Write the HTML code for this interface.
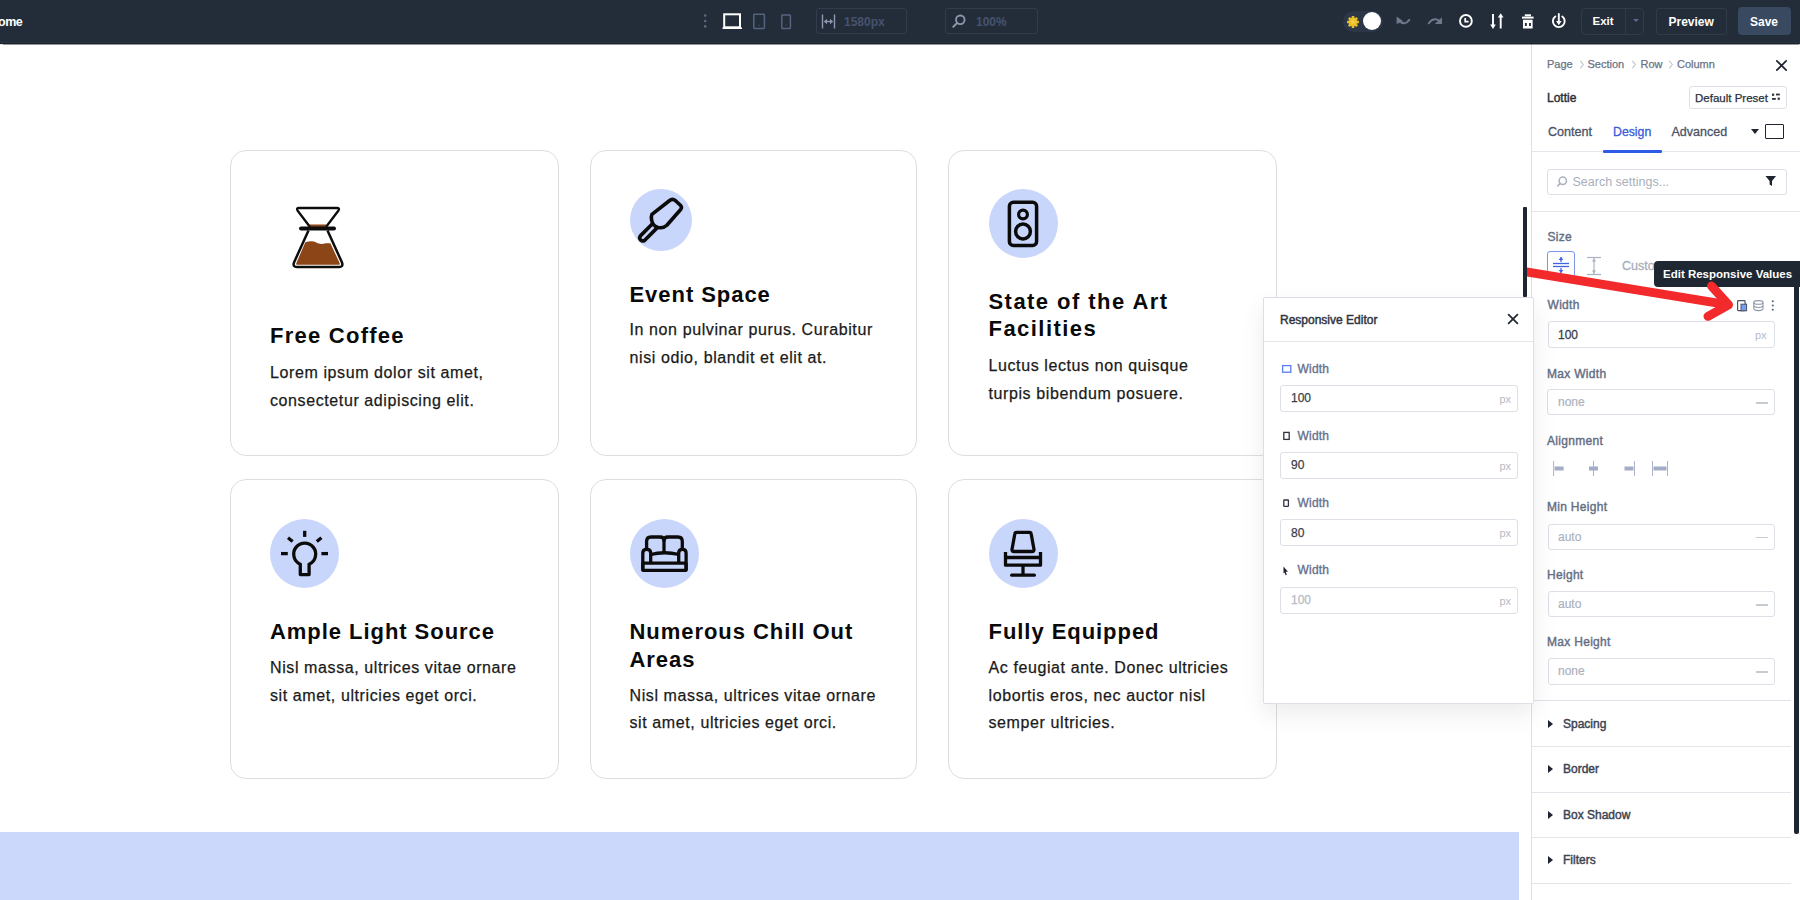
<!DOCTYPE html>
<html><head><meta charset="utf-8">
<style>
*{box-sizing:border-box;margin:0;padding:0}
html,body{width:1800px;height:900px;overflow:hidden;background:#fff;font-family:"Liberation Sans",sans-serif}
.abs{position:absolute}
#top{position:absolute;left:0;top:0;width:1800px;height:44px;background:#232d39;border-bottom:1.5px solid #19202a;box-shadow:inset 0 -1px 0 #2a3441,0 0.6px 0.8px rgba(20,26,34,0.45);z-index:5}
#canvas{position:absolute;left:0;top:44px;width:1531px;height:856px;background:#fff;overflow:hidden}
.card{position:absolute;border:1px solid #dedede;border-radius:16px;background:#fff}
.ttl{position:absolute;font-weight:700;font-size:22px;letter-spacing:0.95px;color:#0a0a0a;line-height:27.5px;white-space:nowrap}
.dsc{position:absolute;font-size:16px;letter-spacing:0.6px;color:#1a1a1a;-webkit-text-stroke:0.25px #1a1a1a;line-height:28px;white-space:nowrap}
.circ{position:absolute;border-radius:50%;background:#c9d6fb}
#panel{position:absolute;left:1531px;top:44px;width:269px;height:856px;background:#fff;border-left:1px solid #dde0e6}
.plabel{position:absolute;font-size:12px;letter-spacing:0.3px;color:#646e83;font-weight:400;-webkit-text-stroke:0.4px #646e83;white-space:nowrap}
.pin{position:absolute;border:1px solid #dcdfe5;border-radius:3px;background:#fff}
.ph{position:absolute;font-size:12px;color:#acb2bf;-webkit-text-stroke:0.2px #acb2bf;white-space:nowrap}
.dash{position:absolute;width:12px;height:1.5px;background:#c5cad3}
.hr{position:absolute;height:1px;background:#e3e5ea}
.sect{position:absolute;font-size:12px;font-weight:400;-webkit-text-stroke:0.45px #3d4452;color:#3d4452;white-space:nowrap}
.tri{position:absolute;width:0;height:0;border-top:4px solid transparent;border-bottom:4px solid transparent;border-left:5px solid #1e2430}
#popup{position:absolute;left:1263px;top:297px;width:271px;height:407px;border-radius:2px;background:#fff;border:1px solid #dcdfe5;box-shadow:0 10px 24px rgba(0,0,0,0.08)}
.rlabel{position:absolute;font-size:12px;letter-spacing:0.2px;color:#66718d;font-weight:400;-webkit-text-stroke:0.35px #66718d;white-space:nowrap}
.rin{position:absolute;left:16px;width:238px;height:27px;border:1px solid #dcdfe5;border-radius:3px;background:#fff}
.rval{position:absolute;left:10px;top:5.5px;font-size:12px;color:#3a3f4a;-webkit-text-stroke:0.25px currentColor}
.rpx{position:absolute;right:6px;top:7px;font-size:11px;color:#b5bac6}
</style></head>
<body>
<!-- TOP BAR -->
<div id="top">
  <div class="abs" style="left:-2px;top:14px;font-size:12.5px;letter-spacing:-0.5px;line-height:16px;font-weight:700;color:#fff">ome</div>
  <svg class="abs" style="left:695px;top:8px" width="110" height="28" viewBox="695 8 110 28">
    <g fill="#5b6782"><circle cx="705.2" cy="15.6" r="1.3"/><circle cx="705.2" cy="21" r="1.3"/><circle cx="705.2" cy="26.4" r="1.3"/></g>
    <rect x="724.2" y="14.3" width="15.8" height="13" fill="none" stroke="#fff" stroke-width="2"/>
    <line x1="722.5" y1="28.2" x2="742" y2="28.2" stroke="#fff" stroke-width="1.6"/>
    <rect x="753.8" y="14.2" width="10.6" height="14.2" rx="0.6" fill="none" stroke="#56637f" stroke-width="1.5"/>
    <circle cx="759.1" cy="25.3" r="0.6" fill="#56637f"/>
    <rect x="781.8" y="15" width="8.6" height="13.4" rx="0.6" fill="none" stroke="#56637f" stroke-width="1.5"/>
    <circle cx="786.1" cy="25" r="0.6" fill="#56637f"/>
  </svg>
  <div class="abs" style="left:815.5px;top:8px;width:91px;height:26px;border:1px solid #323c4c;border-radius:3px"></div>
  <svg class="abs" style="left:818px;top:10px" width="22" height="22" viewBox="818 10 22 22">
    <g stroke="#8d98ae" stroke-width="1.4" fill="none">
      <line x1="822.5" y1="14.5" x2="822.5" y2="28.5"/><line x1="834.5" y1="14.5" x2="834.5" y2="28.5"/>
      <line x1="824.5" y1="21.5" x2="832.5" y2="21.5"/>
    </g>
    <path d="M824,21.5 L827,18.8 V24.2 Z M833,21.5 L830,18.8 V24.2 Z" fill="#8d98ae"/>
  </svg>
  <div class="abs" style="left:844px;top:14.5px;font-size:12px;line-height:14px;font-weight:700;color:#46536f">1580px</div>
  <div class="abs" style="left:945px;top:8px;width:93px;height:26px;border:1px solid #323c4c;border-radius:3px"></div>
  <svg class="abs" style="left:950px;top:12px" width="18" height="18" viewBox="950 12 18 18">
    <circle cx="960.3" cy="19.8" r="4.3" fill="none" stroke="#8d98ae" stroke-width="1.8"/>
    <line x1="957.2" y1="22.9" x2="953.3" y2="26.8" stroke="#8d98ae" stroke-width="2" stroke-linecap="round"/>
  </svg>
  <div class="abs" style="left:976px;top:14.5px;font-size:12px;line-height:14px;font-weight:700;color:#46536f">100%</div>

  <!-- toggle -->
  <div class="abs" style="left:1343px;top:11px;width:40px;height:20.5px;border-radius:11px;background:#2b3647"></div>
  <svg class="abs" style="left:1345px;top:13.5px" width="16" height="16" viewBox="-8 -8 16 16">
    <g fill="#e9c02a">
      <circle r="4.4"/>
      <g id="ray"><rect x="-1.3" y="-5.9" width="2.6" height="2.2" rx="0.4"/></g>
      <use href="#ray" transform="rotate(45)"/><use href="#ray" transform="rotate(90)"/><use href="#ray" transform="rotate(135)"/>
      <use href="#ray" transform="rotate(180)"/><use href="#ray" transform="rotate(225)"/><use href="#ray" transform="rotate(270)"/><use href="#ray" transform="rotate(315)"/>
    </g>
    <circle r="1.8" fill="#f3cf4a"/>
  </svg>
  <div class="abs" style="left:1362.5px;top:12.3px;width:18px;height:18px;border-radius:50%;background:#fff"></div>

  <svg class="abs" style="left:1390px;top:8px" width="190" height="28" viewBox="1390 8 190 28">
    <g fill="none" stroke="#6e798c" stroke-width="2" stroke-linecap="round">
      <path d="M1399,20.5 Q1404.5,26.5 1409.3,19.8"/>
      <path d="M1428.8,23.3 Q1433.5,16.8 1439.5,20.8"/>
    </g>
    <path d="M1396.6,16.6 L1396.6,24 L1403.2,21.2 Z" fill="#6e798c"/>
    <path d="M1442,17.3 L1442,24 L1434.8,24 Z" fill="#6e798c"/>
    <g fill="none" stroke="#fff" stroke-width="1.9" stroke-linecap="round">
      <circle cx="1465.9" cy="20.9" r="5.9"/>
    </g>
    <path d="M1465.2,18 V21.6 H1468.6" fill="none" stroke="#fff" stroke-width="1.7"/>
    <g stroke="#fff" stroke-width="1.9">
      <line x1="1493" y1="14" x2="1493" y2="26"/>
      <line x1="1500.7" y1="16" x2="1500.7" y2="28.5"/>
    </g>
    <path d="M1490.2,24.5 L1493,29 L1495.8,24.5 Z M1497.9,17.5 L1500.7,13.2 L1503.5,17.5 Z" fill="#fff"/>
    <g fill="#fff">
      <rect x="1524.8" y="14.3" width="6.2" height="2"/>
      <rect x="1522" y="16.6" width="11.6" height="2"/>
      <path d="M1523,19.8 H1532.6 V28.4 H1523 Z M1524.9,23 V26 H1526.8 V23 Z M1529,23 V26 H1530.9 V23 Z" fill-rule="evenodd"/>
    </g>
    <g fill="none" stroke="#fff" stroke-width="1.9" stroke-linecap="round">
      <path d="M1555.3,16.5 A5.9,5.9 0 1 0 1562.3,16.5"/>
      <line x1="1558.8" y1="14" x2="1558.8" y2="22"/>
    </g>
    <path d="M1556,21 L1558.8,25.3 L1561.6,21 Z" fill="#fff"/>
  </svg>

  <div class="abs" style="left:1581px;top:7.5px;width:63px;height:27px;border:1px solid #303a4a;border-radius:4px"></div>
  <div class="abs" style="left:1625px;top:8px;width:1px;height:26px;background:#303a4a"></div>
  <div class="abs" style="left:1592.5px;top:14px;font-size:11.5px;line-height:14px;font-weight:700;color:#fff">Exit</div>
  <div class="abs" style="left:1632.5px;top:19px;width:0;height:0;border-left:3px solid transparent;border-right:3px solid transparent;border-top:3.5px solid #5e6a8a"></div>
  <div class="abs" style="left:1656px;top:7.5px;width:71px;height:27.5px;border:1px solid #303a4a;border-radius:3px"></div>
  <div class="abs" style="left:1668.5px;top:14.5px;font-size:12px;line-height:14px;font-weight:700;color:#fff">Preview</div>
  <div class="abs" style="left:1738px;top:7px;width:52.5px;height:28px;border-radius:4px;background:#384960"></div>
  <div class="abs" style="left:1750px;top:14.5px;font-size:12px;line-height:14px;font-weight:700;color:#fff">Save</div>
</div>

<!-- CANVAS -->
<div class="card" style="left:230px;top:150px;width:329px;height:306px"></div>
<div class="card" style="left:590px;top:150px;width:327px;height:306px"></div>
<div class="card" style="left:948px;top:150px;width:329px;height:306px"></div>
<div class="card" style="left:230px;top:479px;width:329px;height:300px"></div>
<div class="card" style="left:590px;top:479px;width:327px;height:300px"></div>
<div class="card" style="left:948px;top:479px;width:329px;height:300px"></div>
<div class="abs" style="left:0;top:832px;width:1519px;height:68px;background:#ccd8fb"></div>

<!-- card 1 coffee -->
<svg class="abs" style="left:280px;top:195px" width="80" height="80" viewBox="280 195 80 80">
  <path d="M305.3,242.3 Q310,240.8 314,241.6 Q320,245.3 325.5,243.2 L330.4,243.2 L339.6,263 Q340.4,264.8 338.5,264.8 L297.6,264.8 Q295.6,264.8 296.4,263 Z" fill="#8b4516"/>
  <path d="M309.5,224.5 L326.5,224.5 L325,228 L311,228 Z" fill="#8b4516"/>
  <path d="M310,227 L297.5,210.5 Q296,208 299,208 L337,208 Q340,208 338.5,210.5 L326,227" fill="none" stroke="#0d0d0d" stroke-width="2.3" stroke-linejoin="round"/>
  <line x1="301" y1="228.5" x2="334" y2="228.5" stroke="#0d0d0d" stroke-width="4" stroke-linecap="round"/>
  <path d="M308.5,230.5 L294,262.5 Q292.5,267 297,267 L339,267 Q343.5,267 342,262.5 L327.5,230.5" fill="none" stroke="#0d0d0d" stroke-width="2.5" stroke-linejoin="round"/>
</svg>
<div class="ttl" style="left:270px;top:322px;letter-spacing:1.25px">Free Coffee</div>
<div class="dsc" style="left:270px;top:359px">Lorem ipsum dolor sit amet,<br>consectetur adipiscing elit.</div>

<!-- card 2 event -->
<div class="circ" style="left:629.7px;top:189px;width:62px;height:62px"></div>
<svg class="abs" style="left:632px;top:192px" width="56" height="56" viewBox="0 0 900 900">
  <g fill="none" stroke="#0b0b0b" stroke-width="58" stroke-linejoin="round" stroke-linecap="round">
    <path d="M320,360 L600,140 Q650,100 700,140 L770,205 Q815,245 775,290 L560,535 Q500,590 420,570 Q330,545 315,450 Q305,395 320,360 Z"/>
    <path d="M325,515 L135,705 A50,50 0 0 0 205,775 L395,585"/>
  </g>
</svg>
<div class="ttl" style="left:629.5px;top:280.5px">Event Space</div>
<div class="dsc" style="left:629.5px;top:316px">In non pulvinar purus. Curabitur<br>nisi odio, blandit et elit at.</div>

<!-- card 3 speaker -->
<div class="circ" style="left:988.5px;top:189.4px;width:69px;height:69px"></div>
<svg class="abs" style="left:980px;top:180px" width="90" height="90" viewBox="980 180 90 90">
  <g fill="none" stroke="#0b0b0b" stroke-width="3.5">
    <rect x="1009.4" y="202.3" width="27.2" height="43.2" rx="4"/>
    <circle cx="1023" cy="214.5" r="4.4" stroke-width="3.2"/>
    <circle cx="1023" cy="231.5" r="7.4"/>
  </g>
</svg>
<div class="ttl" style="left:988.5px;top:288px;line-height:27px;letter-spacing:1.45px">State of the Art<br>Facilities</div>
<div class="dsc" style="left:988.5px;top:352px">Luctus lectus non quisque<br>turpis bibendum posuere.</div>

<!-- card 4 bulb -->
<div class="circ" style="left:270px;top:519px;width:69.4px;height:69.4px"></div>
<svg class="abs" style="left:262px;top:510px" width="90" height="90" viewBox="262 510 90 90">
  <g fill="none" stroke="#0b0b0b" stroke-width="3.3">
    <path d="M300.3,574.6 V564.2 A11,11 0 1 1 309.1,564.2 V574.6 Z" stroke-linejoin="round"/>
    <line x1="304.7" y1="530.8" x2="304.7" y2="536.9"/>
    <line x1="288" y1="537.8" x2="292.6" y2="541.6"/>
    <line x1="321.4" y1="537.8" x2="316.8" y2="541.6"/>
    <line x1="281" y1="553.6" x2="287.8" y2="553.6"/>
    <line x1="321.4" y1="553.6" x2="328" y2="553.6"/>
  </g>
</svg>
<div class="ttl" style="left:270px;top:618px">Ample Light Source</div>
<div class="dsc" style="left:270px;top:654px;line-height:27.7px">Nisl massa, ultrices vitae ornare<br>sit amet, ultricies eget orci.</div>

<!-- card 5 sofa -->
<div class="circ" style="left:630px;top:519px;width:69px;height:69px"></div>
<svg class="abs" style="left:621px;top:510px" width="90" height="90" viewBox="621 510 90 90">
  <g fill="none" stroke="#0b0b0b" stroke-width="3.3" stroke-linejoin="round">
    <path d="M646.6,549 V541.5 Q646.6,537 651,537 H660 Q664,537 664,540.5 Q664,537 668,537 H678 Q682.3,537 682.3,541.5 V549"/>
    <line x1="664" y1="539" x2="664" y2="554"/>
    <path d="M650.7,554.5 Q664,551 679.2,554.5"/>
    <path d="M642.8,570.4 V553 Q642.8,549.3 646.7,549.3 Q650.7,549.3 650.7,553 V563"/>
    <path d="M686.1,570.4 V553 Q686.1,549.3 682.4,549.3 Q678.7,549.3 678.7,553 V563"/>
    <rect x="642.8" y="563.2" width="43.3" height="7.2" rx="1"/>
  </g>
</svg>
<div class="ttl" style="left:629.5px;top:618px;line-height:28px">Numerous Chill Out<br>Areas</div>
<div class="dsc" style="left:629.5px;top:681.5px;line-height:27.7px">Nisl massa, ultrices vitae ornare<br>sit amet, ultricies eget orci.</div>

<!-- card 6 chair -->
<div class="circ" style="left:988.5px;top:519px;width:69px;height:69px"></div>
<svg class="abs" style="left:980px;top:510px" width="90" height="90" viewBox="980 510 90 90">
  <g fill="none" stroke="#0b0b0b" stroke-width="3.3" stroke-linejoin="round">
    <path d="M1016.5,532.3 H1029.5 Q1031,532.3 1031.2,534 L1034,549.5 Q1034.2,551.5 1032,551.5 H1014 Q1011.8,551.5 1012,549.5 L1014.8,534 Q1015,532.3 1016.5,532.3 Z"/>
    <path d="M1005.5,552 V565.2 H1040.5 V552"/>
    <line x1="1005.5" y1="557.5" x2="1040.5" y2="557.5"/>
    <line x1="1023" y1="566" x2="1023" y2="574"/>
    <line x1="1011.7" y1="575.2" x2="1034.3" y2="575.2" stroke-linecap="round"/>
  </g>
</svg>
<div class="ttl" style="left:988.5px;top:618px">Fully Equipped</div>
<div class="dsc" style="left:988.5px;top:654px;line-height:27.7px">Ac feugiat ante. Donec ultricies<br>lobortis eros, nec auctor nisl<br>semper ultricies.</div>

<!-- PANEL -->
<div id="panel"></div>
<div class="abs" style="left:1547px;top:56.5px;font-size:11px;line-height:14px;color:#6a7385;-webkit-text-stroke:0.25px #6a7385;white-space:nowrap">Page</div>
<svg class="abs" style="left:1578.5px;top:60px" width="6" height="9" viewBox="0 0 6 9"><path d="M1.6,1.2 L4.4,4.5 L1.6,7.8" fill="none" stroke="#c0c5cd" stroke-width="1.15" stroke-linecap="round" stroke-linejoin="round"/></svg>
<div class="abs" style="left:1587.5px;top:56.5px;font-size:11px;line-height:14px;color:#6a7385;-webkit-text-stroke:0.25px #6a7385;white-space:nowrap">Section</div>
<svg class="abs" style="left:1631px;top:60px" width="6" height="9" viewBox="0 0 6 9"><path d="M1.6,1.2 L4.4,4.5 L1.6,7.8" fill="none" stroke="#c0c5cd" stroke-width="1.15" stroke-linecap="round" stroke-linejoin="round"/></svg>
<div class="abs" style="left:1640.5px;top:56.5px;font-size:11px;line-height:14px;color:#6a7385;-webkit-text-stroke:0.25px #6a7385;white-space:nowrap">Row</div>
<svg class="abs" style="left:1667.5px;top:60px" width="6" height="9" viewBox="0 0 6 9"><path d="M1.6,1.2 L4.4,4.5 L1.6,7.8" fill="none" stroke="#c0c5cd" stroke-width="1.15" stroke-linecap="round" stroke-linejoin="round"/></svg>
<div class="abs" style="left:1677px;top:56.5px;font-size:11px;line-height:14px;color:#6a7385;-webkit-text-stroke:0.25px #6a7385;white-space:nowrap">Column</div>
<svg class="abs" style="left:1774px;top:58px" width="15" height="15" viewBox="0 0 15 15"><path d="M2.8,2.8 L12.2,12.2 M12.2,2.8 L2.8,12.2" stroke="#1f2430" stroke-width="1.7" stroke-linecap="round"/></svg>
<div class="abs" style="left:1547px;top:90.5px;font-size:12px;line-height:14px;font-weight:400;-webkit-text-stroke:0.45px #2b303b;color:#2b303b">Lottie</div>
<div class="abs" style="left:1689px;top:85.5px;width:97.5px;height:23px;border:1px solid #dcdfe5;border-radius:3px"></div>
<div class="abs" style="left:1695px;top:90.5px;font-size:11.5px;line-height:14px;color:#2b303b;-webkit-text-stroke:0.25px #2b303b;white-space:nowrap">Default Preset</div>
<svg class="abs" style="left:1770px;top:90px" width="12" height="14" viewBox="0 0 12 14"><g fill="#2b303b"><rect x="2" y="3.6" width="2.2" height="2.2"/><rect x="6" y="3.6" width="3.8" height="1.8"/><rect x="2" y="8" width="3.8" height="1.8"/><rect x="7.6" y="7.6" width="2.2" height="2.2"/></g></svg>

<div class="abs" style="left:1548px;top:124.5px;font-size:12.6px;line-height:14px;color:#4a5366;-webkit-text-stroke:0.3px #4a5366;white-space:nowrap">Content</div>
<div class="abs" style="left:1613px;top:124.5px;font-size:12.3px;line-height:14px;color:#3a5bd8;-webkit-text-stroke:0.3px #3a5bd8;white-space:nowrap">Design</div>
<div class="abs" style="left:1671.5px;top:124.5px;font-size:12.5px;line-height:14px;color:#4a5366;-webkit-text-stroke:0.3px #4a5366;white-space:nowrap">Advanced</div>
<div class="abs" style="left:1750.5px;top:128.5px;width:0;height:0;border-left:4px solid transparent;border-right:4px solid transparent;border-top:5px solid #1f2430"></div>
<div class="abs" style="left:1765px;top:123.5px;width:18.5px;height:15px;border:1.8px solid #1f2430;border-radius:1px"></div>
<div class="hr" style="left:1532px;top:151px;width:268px;background:#e4e6eb"></div>
<div class="abs" style="left:1602.5px;top:149.5px;width:59.5px;height:3px;background:#2e5be6;border-radius:1px"></div>

<div class="pin" style="left:1547px;top:168.5px;width:239.5px;height:26px"></div>
<svg class="abs" style="left:1555px;top:174px" width="14" height="14" viewBox="0 0 14 14"><circle cx="7.8" cy="6.8" r="3.7" fill="none" stroke="#aab0bd" stroke-width="1.5"/><line x1="5.2" y1="9.4" x2="2.6" y2="12" stroke="#aab0bd" stroke-width="1.6" stroke-linecap="round"/></svg>
<div class="abs" style="left:1572.5px;top:174.5px;font-size:12.5px;line-height:14px;color:#a9afbb;white-space:nowrap">Search settings...</div>
<svg class="abs" style="left:1764px;top:174px" width="14" height="14" viewBox="0 0 14 14"><path d="M1.5,2 H12 L8,7 V12 L5.6,10.5 V7 Z" fill="#1f2430"/></svg>
<div class="hr" style="left:1532px;top:210.5px;width:268px;background:#e4e6eb"></div>

<div class="plabel" style="left:1547.5px;top:229.5px;line-height:14px">Size</div>
<div class="abs" style="left:1547px;top:251px;width:27.5px;height:27px;border:1px solid #7f93ea;border-radius:3px"></div>
<svg class="abs" style="left:1550px;top:253px" width="22" height="24" viewBox="0 0 22 24"><g stroke="#3f62e2" stroke-width="1.3" fill="#3f62e2"><line x1="3" y1="10.5" x2="19" y2="10.5"/><line x1="3" y1="13.5" x2="19" y2="13.5"/><line x1="11" y1="4" x2="11" y2="9"/><line x1="11" y1="15" x2="11" y2="20"/></g><path d="M8.5,7 L11,4.2 L13.5,7 Z M8.5,17 L11,19.8 L13.5,17 Z" fill="#3f62e2"/></svg>
<svg class="abs" style="left:1584px;top:255px" width="20" height="22" viewBox="0 0 20 22"><g stroke="#aab1be" stroke-width="1.2" fill="none"><line x1="3" y1="2.5" x2="17" y2="2.5"/><line x1="3" y1="19.5" x2="17" y2="19.5"/><line x1="10" y1="3" x2="10" y2="19"/></g><path d="M7.8,6.5 L10,3.8 L12.2,6.5 Z M7.8,15.5 L10,18.2 L12.2,15.5 Z" fill="#aab1be"/></svg>
<div class="abs" style="left:1622px;top:258.5px;font-size:12.5px;line-height:14px;color:#a8aebb;-webkit-text-stroke:0.3px #a8aebb;white-space:nowrap">Custom</div>

<div class="plabel" style="left:1547.5px;top:298.3px;line-height:14px">Width</div>
<svg class="abs" style="left:1735px;top:298px" width="44" height="15" viewBox="0 0 44 15"><g fill="none" stroke="#4a5366" stroke-width="1.2"><rect x="2.6" y="2.6" width="7.5" height="10" rx="0.8"/></g><rect x="6" y="6.2" width="5.6" height="6.6" fill="#7b9cf0" stroke="#4a5366" stroke-width="1"/><g fill="none" stroke="#8d95a6" stroke-width="1.1"><ellipse cx="23.4" cy="4.4" rx="4.6" ry="1.8"/><path d="M18.8,4.4 V10.6 Q18.8,12.6 23.4,12.6 Q28,12.6 28,10.6 V4.4 M18.8,7.6 Q18.8,9.5 23.4,9.5 Q28,9.5 28,7.6"/></g><g fill="#5c6577"><circle cx="37.8" cy="3.3" r="1.05"/><circle cx="37.8" cy="7.5" r="1.05"/><circle cx="37.8" cy="11.7" r="1.05"/></g></svg>
<div class="pin" style="left:1547.5px;top:321px;width:227.5px;height:27px"></div>
<div class="abs" style="left:1558px;top:327.5px;font-size:12px;line-height:14px;color:#3a3f4a;-webkit-text-stroke:0.3px #3a3f4a">100</div>
<div class="abs" style="left:1755px;top:328px;font-size:11px;line-height:14px;color:#b7bcc7">px</div>

<div class="plabel" style="left:1547px;top:366.5px;line-height:14px">Max Width</div>
<div class="pin" style="left:1547px;top:388.5px;width:228px;height:26.5px"></div>
<div class="ph" style="left:1558px;top:395px;line-height:14px">none</div>
<div class="dash" style="left:1756px;top:402px"></div>

<div class="plabel" style="left:1547px;top:433.5px;line-height:14px">Alignment</div>
<svg class="abs" style="left:1550px;top:460px" width="122" height="18" viewBox="1550 460 122 18"><g fill="#a4acc6"><rect x="1553.2" y="461" width="0.9" height="15"/><rect x="1554.6" y="466.5" width="9" height="4"/><rect x="1593" y="461" width="0.9" height="15"/><rect x="1589" y="466.5" width="9" height="4"/><rect x="1634" y="461" width="0.9" height="15"/><rect x="1624.5" y="466.5" width="9" height="4"/><rect x="1652" y="461" width="0.9" height="15"/><rect x="1667" y="461" width="0.9" height="15"/><rect x="1653.5" y="466.5" width="13" height="4"/></g></svg>

<div class="plabel" style="left:1547px;top:500.2px;line-height:14px">Min Height</div>
<div class="pin" style="left:1547.5px;top:523.5px;width:227px;height:26.5px"></div>
<div class="ph" style="left:1558px;top:529.5px;line-height:14px">auto</div>
<div class="dash" style="left:1756px;top:536.5px"></div>

<div class="plabel" style="left:1547px;top:568px;line-height:14px">Height</div>
<div class="pin" style="left:1547.5px;top:590.5px;width:227px;height:26.5px"></div>
<div class="ph" style="left:1558px;top:596.5px;line-height:14px">auto</div>
<div class="dash" style="left:1756px;top:604px"></div>

<div class="plabel" style="left:1547px;top:635px;line-height:14px">Max Height</div>
<div class="pin" style="left:1547.5px;top:658px;width:227px;height:26.5px"></div>
<div class="ph" style="left:1558px;top:664px;line-height:14px">none</div>
<div class="dash" style="left:1756px;top:671px"></div>

<div class="hr" style="left:1532px;top:700px;width:259px;background:#dfe2e8"></div>
<div class="tri" style="left:1547.5px;top:719.5px"></div>
<div class="sect" style="left:1563px;top:716.8px;line-height:14px">Spacing</div>
<div class="hr" style="left:1532px;top:746px;width:259px"></div>
<div class="tri" style="left:1547.5px;top:765px"></div>
<div class="sect" style="left:1563px;top:762.3px;line-height:14px">Border</div>
<div class="hr" style="left:1532px;top:791.7px;width:259px"></div>
<div class="tri" style="left:1547.5px;top:810.5px"></div>
<div class="sect" style="left:1563px;top:807.8px;line-height:14px">Box Shadow</div>
<div class="hr" style="left:1532px;top:837px;width:259px"></div>
<div class="tri" style="left:1547.5px;top:856px"></div>
<div class="sect" style="left:1563px;top:853.3px;line-height:14px">Filters</div>
<div class="hr" style="left:1532px;top:882.7px;width:259px"></div>

<div class="abs" style="left:1794px;top:280px;width:4.5px;height:554px;background:#1e2532;border-radius:2px"></div>
<div class="abs" style="left:1523px;top:207px;width:4px;height:90px;background:#1e2532;border-radius:1px"></div>

<!-- POPUP -->
<div id="popup">
  <div class="abs" style="left:16px;top:14.5px;font-size:12px;line-height:14px;font-weight:400;-webkit-text-stroke:0.45px #2f3440;color:#2f3440;white-space:nowrap">Responsive Editor</div>
  <svg class="abs" style="left:242px;top:14px" width="14" height="14" viewBox="0 0 14 14"><path d="M2.6,2.6 L11.4,11.4 M11.4,2.6 L2.6,11.4" stroke="#262b35" stroke-width="1.8" stroke-linecap="round"/></svg>
  <div class="abs" style="left:0;top:43px;width:269px;height:1px;background:#e3e5ea"></div>

  <svg class="abs" style="left:17px;top:66px" width="12" height="10" viewBox="0 0 12 10"><rect x="1.6" y="1.6" width="8.2" height="6.6" fill="none" stroke="#5a7df0" stroke-width="1.3"/></svg>
  <div class="rlabel" style="left:33.5px;top:63.7px;line-height:14px">Width</div>
  <div class="rin" style="top:86.5px"><div class="rval">100</div><div class="rpx">px</div></div>

  <svg class="abs" style="left:18px;top:133px" width="10" height="10" viewBox="0 0 10 10"><rect x="1.8" y="1.4" width="5.4" height="7" fill="none" stroke="#2f3440" stroke-width="1.3"/></svg>
  <div class="rlabel" style="left:33.5px;top:131.2px;line-height:14px">Width</div>
  <div class="rin" style="top:153.5px"><div class="rval">90</div><div class="rpx">px</div></div>

  <svg class="abs" style="left:18px;top:200px" width="10" height="10" viewBox="0 0 10 10"><rect x="1.8" y="2" width="4.6" height="6.4" rx="0.5" fill="none" stroke="#2f3440" stroke-width="1.3"/></svg>
  <div class="rlabel" style="left:33.5px;top:198.2px;line-height:14px">Width</div>
  <div class="rin" style="top:221px"><div class="rval">80</div><div class="rpx">px</div></div>

  <svg class="abs" style="left:17px;top:267px" width="10" height="12" viewBox="0 0 10 12"><path d="M2.5,1.5 L7,6.8 L4.8,6.8 L5.8,9.8 L4.6,10.2 L3.6,7.4 L2.5,8.6 Z" fill="#1f2430"/></svg>
  <div class="rlabel" style="left:33.5px;top:265.2px;line-height:14px">Width</div>
  <div class="rin" style="top:288.5px"><div class="rval" style="color:#b5bac6">100</div><div class="rpx">px</div></div>
</div>

<!-- TOOLTIP -->
<div class="abs" style="left:1654px;top:261px;width:150px;height:25.5px;background:#1f2733;border-radius:4px 0 0 4px"></div>
<div class="abs" style="left:1663px;top:267px;font-size:11.5px;line-height:14px;font-weight:700;color:#fff;white-space:nowrap">Edit Responsive Values</div>

<!-- ARROW -->
<svg class="abs" style="left:1527px;top:250px" width="233" height="80" viewBox="1527 250 233 80">
  <g stroke="#f32a2b" stroke-width="9" stroke-linecap="round" stroke-linejoin="round" fill="none">
    <line x1="1515" y1="270" x2="1727" y2="304.6"/>
    <path d="M1711.5,286 L1728.5,304.8 L1708,316.3"/>
  </g>
</svg>
</body></html>
